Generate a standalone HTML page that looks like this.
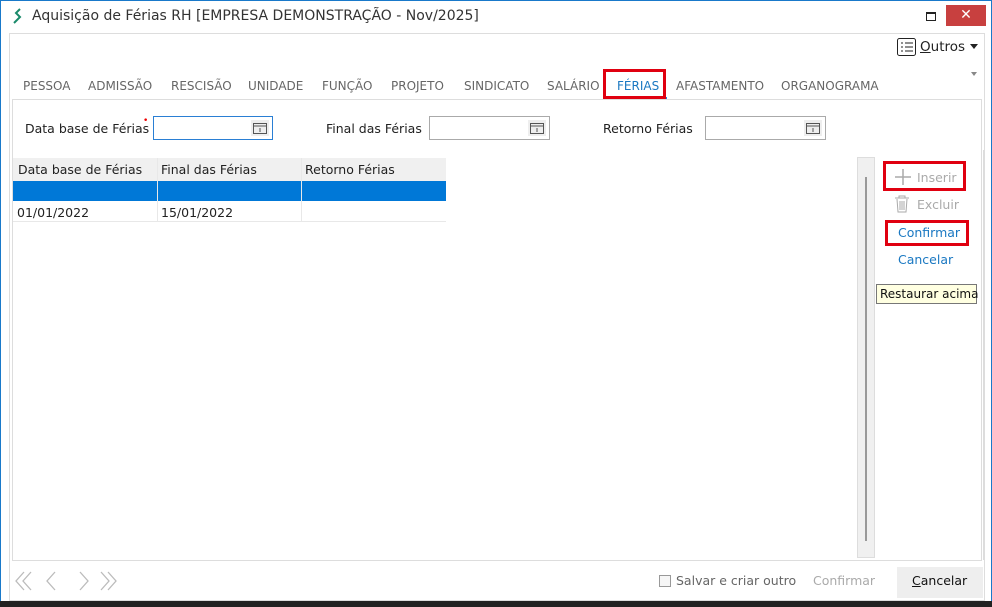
<!DOCTYPE html>
<html><head><meta charset="utf-8"><style>
*{margin:0;padding:0;box-sizing:border-box}
body{width:992px;height:607px;position:relative;overflow:hidden;background:#fff;font-family:"DejaVu Sans","Liberation Sans",sans-serif;font-size:12px;color:#222}
.a{position:absolute;white-space:nowrap}
.tab{position:absolute;top:79px;font-size:12px;color:#666}
.inp{position:absolute;height:24px;border:1px solid #aaa;background:#fff}
.inp svg{position:absolute;right:3px;top:3px}
.lbl{position:absolute;font-size:12.5px;color:#222}
.red{position:absolute;border:3px solid #e00010}
</style></head><body>
<div class="a" style="left:0;top:0;width:992px;height:602px;border:1px solid #1979ca;border-bottom:none"></div>
<div class="a" style="left:0;top:601px;width:992px;height:6px;background:#222"></div>
<svg class="a" style="left:12px;top:8px" width="12" height="17" viewBox="0 0 12 17"><path d="M8 1 L4 5 L8 9 L4 13 L2 15" fill="none" stroke="#1a8a6a" stroke-width="2"/></svg>
<div class="a" style="left:32px;top:8px;font-size:14px;color:#333">Aquisição de Férias RH [EMPRESA DEMONSTRAÇÃO - Nov/2025]</div>
<div class="a" style="left:926px;top:12px;width:10px;height:9px;border:1.5px solid #222;border-top-width:2px"></div>
<div class="a" style="left:946px;top:5px;width:40px;height:21px;background:#c8403f;color:#fff;text-align:center;font-size:14px;line-height:21px">✕</div>
<div class="a" style="left:9px;top:33px;width:976px;height:568px;border:1px solid #ddd"></div>
<svg class="a" style="left:897px;top:38px" width="19" height="18" viewBox="0 0 19 18"><rect x="0.5" y="0.5" width="18" height="17" rx="2" fill="none" stroke="#222"/><path d="M4 5h2M8 5h8M4 9h2M8 9h8M4 13h2M8 13h8" stroke="#222"/></svg>
<div class="a" style="left:920px;top:39px;font-size:13.5px;color:#222"><u>O</u>utros</div>
<div class="a" style="left:970px;top:44px;width:0;height:0;border:4.5px solid transparent;border-top:5px solid #222"></div>
<div class="a" style="left:971px;top:72px;width:0;height:0;border:3.5px solid transparent;border-top:4px solid #888"></div>
<div class="tab" style="left:23px">PESSOA</div>
<div class="tab" style="left:88px">ADMISSÃO</div>
<div class="tab" style="left:171px">RESCISÃO</div>
<div class="tab" style="left:248px">UNIDADE</div>
<div class="tab" style="left:322px">FUNÇÃO</div>
<div class="tab" style="left:391px">PROJETO</div>
<div class="tab" style="left:464px">SINDICATO</div>
<div class="tab" style="left:547px">SALÁRIO</div>
<div class="tab" style="left:617px;color:#1a78c2">FÉRIAS</div>
<div class="a" style="left:606px;top:97px;width:61px;height:3px;background:#2a7fd4"></div>
<div class="red" style="left:603px;top:69px;width:63px;height:30px"></div>
<div class="tab" style="left:676px">AFASTAMENTO</div>
<div class="tab" style="left:781px">ORGANOGRAMA</div>
<div class="a" style="left:12px;top:99px;width:970px;height:462px;border:1px solid #ddd"></div>
<div class="lbl" style="left:25px;top:121px">Data base de Férias</div>
<div class="a" style="left:143px;top:116px;color:#e00;font-size:9px">•</div>
<div class="inp" style="left:153px;top:116px;width:120px;border-color:#2a7fd4"><svg width="18" height="16"><rect width="18" height="16" fill="#eee"/><rect x="2.5" y="3.5" width="13" height="10" fill="none" stroke="#555"/><path d="M2.5 6h13M9 8v4" stroke="#555"/></svg></div>
<div class="lbl" style="left:326px;top:121px">Final das Férias</div>
<div class="inp" style="left:429px;top:116px;width:121px"><svg width="18" height="16"><rect width="18" height="16" fill="#eee"/><rect x="2.5" y="3.5" width="13" height="10" fill="none" stroke="#555"/><path d="M2.5 6h13M9 8v4" stroke="#555"/></svg></div>
<div class="lbl" style="left:603px;top:121px">Retorno Férias</div>
<div class="inp" style="left:705px;top:116px;width:121px"><svg width="18" height="16"><rect width="18" height="16" fill="#eee"/><rect x="2.5" y="3.5" width="13" height="10" fill="none" stroke="#555"/><path d="M2.5 6h13M9 8v4" stroke="#555"/></svg></div>
<div class="a" style="left:13px;top:158px;width:433px;height:23px;background:#f0f0f0"></div>
<div class="a" style="left:18px;top:162px;font-size:12.5px">Data base de Férias</div>
<div class="a" style="left:161px;top:162px;font-size:12.5px">Final das Férias</div>
<div class="a" style="left:305px;top:162px;font-size:12.5px">Retorno Férias</div>
<div class="a" style="left:13px;top:181px;width:433px;height:20px;background:#0078d7"></div>
<div class="a" style="left:157px;top:158px;width:1px;height:64px;background:#e8e8e8"></div>
<div class="a" style="left:301px;top:158px;width:1px;height:64px;background:#e8e8e8"></div>
<div class="a" style="left:13px;top:221px;width:433px;height:1px;background:#e8e8e8"></div>
<div class="a" style="left:17px;top:205px;font-size:12.5px">01/01/2022</div>
<div class="a" style="left:161px;top:205px;font-size:12.5px">15/01/2022</div>
<div class="a" style="left:857px;top:157px;width:18px;height:401px;background:#f0f0f0;border:1px solid #ddd"></div>
<div class="a" style="left:865px;top:177px;width:2px;height:364px;background:#999"></div>
<div class="a" style="left:983px;top:150px;width:1px;height:410px;background:#ddd"></div>
<div class="red" style="left:883px;top:161px;width:83px;height:30px"></div>
<svg class="a" style="left:894px;top:168px" width="18" height="18"><path d="M9 1v16M1 9h16" stroke="#aaa" stroke-width="1.5"/></svg>
<div class="a" style="left:917px;top:170px;font-size:12.5px;color:#aaa">Inserir</div>
<svg class="a" style="left:894px;top:195px" width="16" height="18"><path d="M1 3h14M5 3V1h6v2M3 4l1 13h8l1-13M6 6v9M8 6v9M10 6v9" fill="none" stroke="#aaa"/></svg>
<div class="a" style="left:917px;top:197px;font-size:12.5px;color:#aaa">Excluir</div>
<div class="red" style="left:885px;top:220px;width:84px;height:26px"></div>
<div class="a" style="left:898px;top:225px;font-size:12.5px;color:#1a78c2">Confirmar</div>
<div class="a" style="left:898px;top:252px;font-size:12.5px;color:#1a78c2">Cancelar</div>
<div class="a" style="left:876px;top:284px;width:101px;height:20px;background:#ffffe1;border:1px solid #777;font-size:12px;padding:2px 3px;color:#111">Restaurar acima</div>
<svg class="a" style="left:14px;top:570px" width="106" height="22"><g fill="none" stroke="#bbb" stroke-width="1.3"><path d="M10 2L2 11l8 9M17 2L9 11l8 9M41 2l-8 9 8 9M66 2l8 9-8 9M87 2l8 9-8 9M94 2l8 9-8 9"/></g></svg>
<div class="a" style="left:659px;top:575px;width:12px;height:12px;border:1px solid #999;background:#f6f6f6"></div>
<div class="a" style="left:676px;top:573px;font-size:12.5px;color:#666">Salvar e criar outro</div>
<div class="a" style="left:813px;top:573px;font-size:12.5px;color:#aaa">Confirmar</div>
<div class="a" style="left:897px;top:567px;width:86px;height:31px;background:#eee"></div>
<div class="a" style="left:912px;top:573px;font-size:12.5px;color:#111"><u>C</u>ancelar</div>
</body></html>
